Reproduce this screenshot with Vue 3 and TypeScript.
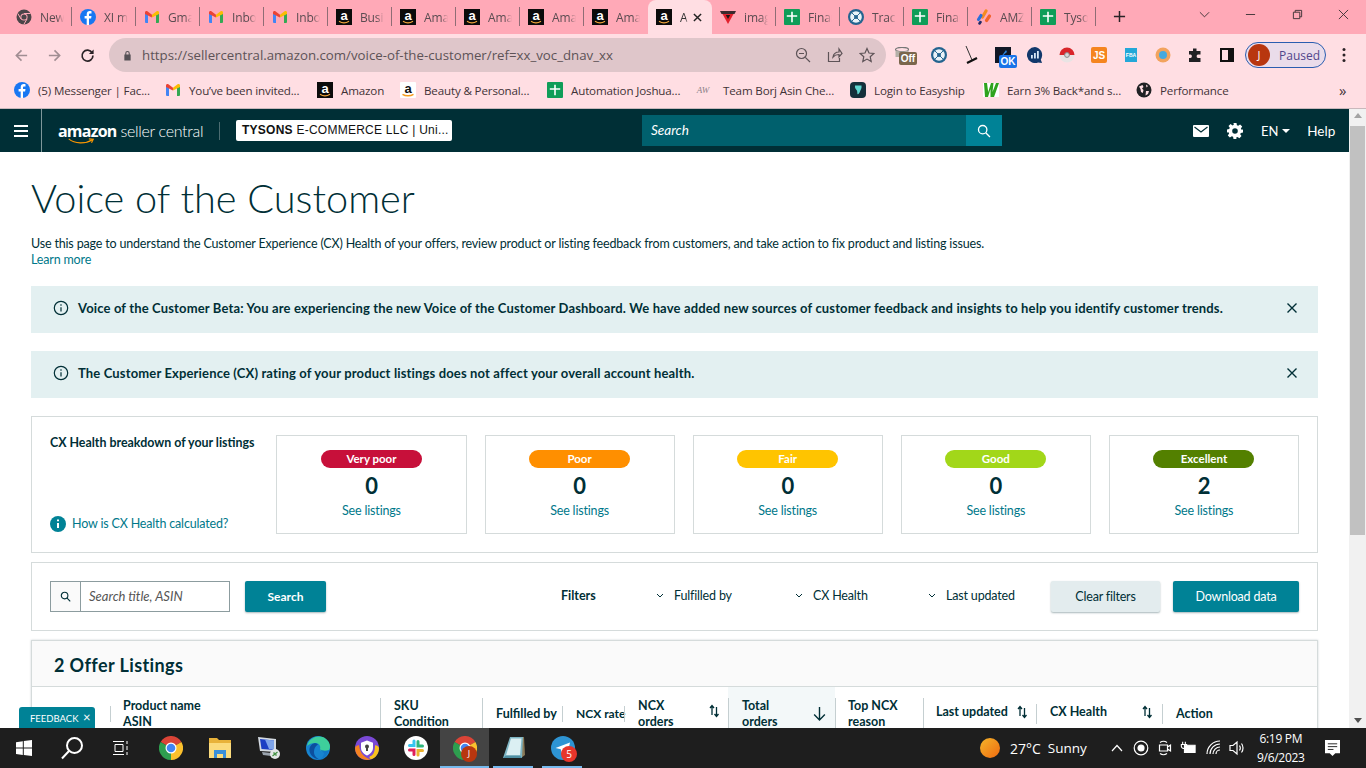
<script setup lang="ts">
interface Tab { icon: string; title: string; active?: boolean }
interface Bookmark { icon: string; title: string }
interface Rating { label: string; count: number; tone: string }
interface Column { title: string[]; sep: string; sort?: string; current?: boolean; name: string }

const tabs: Tab[] = [
  { icon: 'chromegrey', title: 'New Tab' },
  { icon: 'fb', title: 'XI main' },
  { icon: 'gmail', title: 'Gmail' },
  { icon: 'gmail', title: 'Inbox' },
  { icon: 'gmail', title: 'Inbox' },
  { icon: 'amz', title: 'Business' },
  { icon: 'amz', title: 'Amazon' },
  { icon: 'amz', title: 'Amazon' },
  { icon: 'amz', title: 'Amazon' },
  { icon: 'amz', title: 'Amazon' },
  { icon: 'amz', title: 'Amazon', active: true },
  { icon: 'imag', title: 'image' },
  { icon: 'sheet', title: 'Finance' },
  { icon: 'track', title: 'Tracker' },
  { icon: 'sheet', title: 'Finance' },
  { icon: 'slash', title: 'AMZ' },
  { icon: 'sheet', title: 'Tysons' },
]

const bookmarks: Bookmark[] = [
  { icon: 'fb', title: '(5) Messenger | Fac...' },
  { icon: 'gmail', title: 'You’ve been invited...' },
  { icon: 'amz', title: 'Amazon' },
  { icon: 'amzlight', title: 'Beauty & Personal...' },
  { icon: 'sheet', title: 'Automation Joshua...' },
  { icon: 'team', title: 'Team Borj Asin Che...' },
  { icon: 'easyship', title: 'Login to Easyship' },
  { icon: 'earn', title: 'Earn 3% Back*and s...' },
  { icon: 'globe', title: 'Performance' },
]

const ratings: Rating[] = [
  { label: 'Very poor', count: 0, tone: 'very-poor' },
  { label: 'Poor', count: 0, tone: 'poor' },
  { label: 'Fair', count: 0, tone: 'fair' },
  { label: 'Good', count: 0, tone: 'good' },
  { label: 'Excellent', count: 2, tone: 'excellent' },
]

const columns: Column[] = [
  { name: 'select', title: [], sep: 'none' },
  { name: 'product', title: ['Product name', 'ASIN'], sep: 'short' },
  { name: 'sku', title: ['SKU', 'Condition'], sep: 'tall' },
  { name: 'fulfilled', title: ['Fulfilled by'], sep: 'tall' },
  { name: 'rate', title: ['NCX rate'], sep: 'short' },
  { name: 'orders', title: ['NCX', 'orders'], sep: 'short', sort: 'both' },
  { name: 'total', title: ['Total', 'orders'], sep: 'tall', sort: 'down', current: true },
  { name: 'reason', title: ['Top NCX', 'reason'], sep: 'tall' },
  { name: 'updated', title: ['Last updated'], sep: 'tall', sort: 'both' },
  { name: 'health', title: ['CX Health'], sep: 'mid', sort: 'both' },
  { name: 'action', title: ['Action'], sep: 'mid' },
]

const dock: string[] = ['chrome', 'folder', 'rdp', 'edge', 'vpn', 'slack', 'chrome', 'notes', 'telegram']
</script>

<template>
  <div class="screen">
    <svg class="defs" width="0" height="0" aria-hidden="true">
      <symbol id="i-chromegrey" viewBox="0 0 16 16">
        <circle cx="8" cy="8" r="7.5" fill="#4a4548" />
        <path d="M8 4.500h6.500M5 10 1.800 4.500M11 10l-3.200 5.500" stroke="#ffa9b7" stroke-width="1" />
        <circle cx="8" cy="8" r="3.600" fill="#ffa9b7" />
        <circle cx="8" cy="8" r="2.600" fill="#4a4548" />
      </symbol>
      <symbol id="i-fb" viewBox="0 0 16 16">
        <circle cx="8" cy="8" r="8" fill="#1877f2" />
        <path d="M9 16V9.6h2.1l.4-2.5H9V5.6c0-.8.3-1.2 1.3-1.2h1.2V2.2c-.5-.1-1.2-.2-1.8-.2C8 2 6.700 3 6.700 5.200v1.900H4.600v2.500h2.100V16z" fill="#fff" />
      </symbol>
      <symbol id="i-gmail" viewBox="0 0 16 16">
        <path d="M1 14V4l3 2v8H2a1 1 0 0 1-1-1z" fill="#4285f4" />
        <path d="M15 14V4l-3 2v8h2a1 1 0 0 0 1-1z" fill="#34a853" />
        <path d="M1 5V3.500C1 2.200 2.400 1.600 3.400 2.300L8 5.800l-.1 2.600z" fill="#ea4335" />
        <path d="M15 5V3.500c0-1.300-1.400-1.900-2.400-1.200L8 5.800v2.600z" fill="#fbbc04" />
      </symbol>
      <symbol id="i-amz" viewBox="0 0 16 16">
        <rect width="16" height="16" fill="#0b0b0b" />
        <text x="8" y="10.800" text-anchor="middle" font-family="Liberation Sans, sans-serif" font-weight="700" font-size="13" fill="#fff">a</text>
        <path d="M3 12.300c3 2 7 2 10 0" fill="none" stroke="#f0a43a" stroke-width="1.200" />
      </symbol>
      <symbol id="i-amzlight" viewBox="0 0 16 16">
        <rect width="16" height="16" rx="1" fill="#fff" />
        <text x="8" y="10.800" text-anchor="middle" font-family="Liberation Sans, sans-serif" font-weight="700" font-size="13" fill="#111">a</text>
        <path d="M2.500 12.300c3 2 8 2 11 0" fill="none" stroke="#f59b1c" stroke-width="1.400" />
      </symbol>
      <symbol id="i-sheet" viewBox="0 0 16 16">
        <rect width="16" height="16" rx="1" fill="#0f9d58" />
        <path d="M7.200 2.800h1.600v3.400h4.400v1.600H8.800v5.400H7.200V7.800H2.800V6.200h4.400z" fill="#fff" />
      </symbol>
      <symbol id="i-track" viewBox="0 0 16 16">
        <circle cx="8" cy="8" r="8" fill="#24648f" />
        <circle cx="8" cy="8" r="5.800" fill="#e9f2f7" />
        <path d="M8 1.500v13M1.500 8h13" stroke="#24648f" stroke-width="0.900" transform="rotate(45 8 8)" />
        <circle cx="8" cy="8" r="2" fill="#24648f" />
      </symbol>
      <symbol id="i-imag" viewBox="0 0 16 16">
        <path d="M0 2h16l-1.500 3h-13z" fill="#3a2a2e" />
        <path d="M2.500 5h11L8 15z" fill="#e2202c" />
        <path d="M5.800 6h4.400L8 10z" fill="#1d1416" />
      </symbol>
      <symbol id="i-slash" viewBox="0 0 16 16">
        <path d="M6.500 8 10 2" stroke="#f58a1f" stroke-width="3.200" stroke-linecap="round" />
        <path d="M10.500 11.500 13.500 7" stroke="#f2622a" stroke-width="3.200" stroke-linecap="round" />
        <path d="M2.500 10.500 5 6.500" stroke="#2a6fdb" stroke-width="3.200" stroke-linecap="round" />
        <path d="M3.500 14.500 4.500 13" stroke="#1f2a66" stroke-width="2.600" stroke-linecap="round" />
      </symbol>
      <symbol id="i-team" viewBox="0 0 16 16">
        <text x="8" y="11" text-anchor="middle" font-family="Liberation Serif, serif" font-style="italic" font-size="9" fill="#8a7f88">AW</text>
      </symbol>
      <symbol id="i-easyship" viewBox="0 0 16 16">
        <rect width="16" height="16" rx="4" fill="#15303b" />
        <path d="M5 3.500h6.500c.5 3-1 4.500-1.500 6-.4 1.200-1.500 3-2.300 2.800-.6-.2-.2-2.600-.8-3.700C6 7.300 4.500 6 5 3.500z" fill="#5fd6cf" />
      </symbol>
      <symbol id="i-earn" viewBox="0 0 16 16">
        <path d="M0 1h16v14H0z" fill="#fff" />
        <path d="M1 1h3l1.200 9L8 1h2.500L9.500 10 13 1h3l-5 14H7.500L7.500 7 5 15H2z" fill="#2fa31e" />
      </symbol>
      <symbol id="i-globe" viewBox="0 0 16 16">
        <circle cx="8" cy="8" r="7.500" fill="#202124" />
        <path d="M3 4.500 6.500 3l1 2-1.500 1.500L7.500 8 6.800 11 5 10 4.500 7zM10 9h3l-1 3-2.500 1.500zM10 2.500l2 1.500-1.500 1.500z" fill="#ffdee3" />
      </symbol>
    </svg>

    <header class="tabstrip">
      <div
        v-for="(tab, i) in tabs"
        :key="i"
        class="tab"
        :class="{ active: tab.active, 'no-sep': tab.active || tabs[i + 1]?.active }"
      >
        <svg class="fav"><use :href="'#i-' + tab.icon" /></svg>
        <span class="tab-title">{{ tab.title }}</span>
        <svg v-if="tab.active" class="tab-close" viewBox="0 0 10 10"><path d="M1 1l8 8M9 1l-8 8" /></svg>
      </div>
      <svg class="new-tab" viewBox="0 0 14 14"><path d="M7 1v12M1 7h12" /></svg>
      <div class="win-controls">
        <svg class="win-list" viewBox="0 0 12 8"><path d="M1 1l5 5 5-5" /></svg>
        <svg class="win-min" viewBox="0 0 12 12"><path d="M1 6h10" /></svg>
        <svg class="win-max" viewBox="0 0 12 12"><path d="M1.500 3.500h7v7h-7zM3.500 3.500v-2h7v7h-2" /></svg>
        <svg class="win-close" viewBox="0 0 12 12"><path d="M1 1l10 10M11 1L1 11" /></svg>
      </div>
    </header>

    <div class="toolbar">
      <svg class="tool-nav" viewBox="0 0 16 16"><path d="M14 8H2.500M8 2.500 2.500 8 8 13.500" /></svg>
      <svg class="tool-nav" viewBox="0 0 16 16"><path d="M2 8h11.500M8 2.500 13.500 8 8 13.500" /></svg>
      <svg class="tool-reload" viewBox="0 0 16 16">
        <path d="M13 5.200A5.800 5.800 0 1 0 13.800 8" />
        <path class="fill" d="M14.500 1.500v5h-5z" />
      </svg>
      <div class="omnibox">
        <svg class="lock" viewBox="0 0 10 12"><path d="M2.500 5V3.500a2.500 2.500 0 0 1 5 0V5h1v6.500h-7V5zm1.200 0h2.600V3.500a1.300 1.300 0 0 0-2.600 0z" /></svg>
        <span class="url">https://sellercentral.amazon.com/voice-of-the-customer/ref=xx_voc_dnav_xx</span>
        <svg class="omni-icon zoom-out" viewBox="0 0 16 16"><circle cx="6.500" cy="6.500" r="5" /><path d="M10.300 10.300 15 15M4 6.500h5" /></svg>
        <svg class="omni-icon share" viewBox="0 0 16 16"><path d="M1.500 5v9.500h11V11M6 10c.5-3 2.500-5 6-5V2l3 4.500L12 10V7.500c-2.500 0-4.500.7-6 2.500z" /></svg>
        <svg class="omni-icon star" viewBox="0 0 16 16"><path d="M8 1.500l2 4.500 4.800.5-3.600 3.200 1 4.800L8 12.100l-4.200 2.400 1-4.800L1.200 6.500 6 6z" /></svg>
      </div>
      <div class="extensions">
        <span class="ext"><svg class="ext-can" viewBox="0 0 14 12" width="14" height="12"><ellipse cx="7" cy="2.500" rx="6.500" ry="2.200" fill="none" stroke="#777" stroke-width="1.200" /><path d="M.5 3v7h13V3c-3 2-10 2-13 0z" fill="#b4b0a8" /></svg><b class="ext-off">Off</b></span>
        <span class="ext"><svg class="fav"><use href="#i-track" /></svg></span>
        <span class="ext"><svg viewBox="0 0 16 18" width="16" height="18"><path d="M3 0l6 14" fill="none" stroke="#333" stroke-width="1" /><path d="M4 17l10-5" stroke="#111" stroke-width="2.200" /></svg></span>
        <span class="ext"><svg viewBox="0 0 16 16" width="16" height="16"><rect width="16" height="16" fill="#111725" /><path d="M6 10 11 3l1 2z" fill="#2a82d6" /></svg><b class="ext-ok">OK</b></span>
        <span class="ext"><svg viewBox="0 0 16 16" width="16" height="16"><path d="M8 0a8 8 0 1 0 3 15.400l4 .6-1.200-3.600A8 8 0 0 0 8 0z" fill="#12386b" /><path d="M4 8h1.800v3.500H4zM7 6h1.800v5.500H7zM10 4h1.800v7.500H10z" fill="#d8e6f5" /></svg></span>
        <span class="ext"><svg viewBox="0 0 16 16" width="16" height="16"><circle cx="8" cy="8" r="7.500" fill="#e9e4e4" /><path d="M.500 8a7.500 7.500 0 0 1 15 0z" fill="#d9252a" /><circle cx="8" cy="8" r="2.400" fill="#d8d8d8" stroke="#888" /></svg></span>
        <span class="ext"><span class="ext-js">JS</span></span>
        <span class="ext"><span class="ext-fba">FBA</span></span>
        <span class="ext"><svg viewBox="0 0 16 16" width="16" height="16"><circle cx="8" cy="8" r="7.500" fill="#f2a35e" /><circle cx="8" cy="8" r="4" fill="#45a9e0" /></svg></span>
        <span class="ext"><svg viewBox="0 0 16 16" width="16" height="16"><path d="M6 1.500h3.500V4h4v3.500H11a1.800 1.800 0 0 0 0 3.500h2.500V15H2v-4h1.500a1.800 1.800 0 0 0 0-3.500H2V4h4z" fill="#202124" /></svg></span>
        <span class="ext"><svg viewBox="0 0 14 14" width="14" height="14"><rect x="1" y="1" width="12" height="12" fill="none" stroke="#111" stroke-width="2" /><rect x="8" y="1" width="5" height="12" fill="#111" /></svg></span>
      </div>
      <div class="profile">
        <span class="avatar">J</span>
        <span class="profile-label">Paused</span>
      </div>
      <svg class="kebab" viewBox="0 0 4 16"><circle cx="2" cy="2.500" r="1.500" /><circle cx="2" cy="8" r="1.500" /><circle cx="2" cy="13.500" r="1.500" /></svg>
    </div>

    <nav class="bookmarks">
      <div v-for="mark in bookmarks" :key="mark.title" class="bookmark">
        <svg class="fav"><use :href="'#i-' + mark.icon" /></svg>
        <span>{{ mark.title }}</span>
      </div>
      <span class="more">»</span>
    </nav>

    <div class="viewport">
      <div class="page">
        <div class="topbar">
          <div class="burger"><i></i><i></i><i></i></div>
          <div class="brand">
            <span class="brand-amazon">amazon</span>
            <span class="brand-seller">seller central</span>
            <svg class="brand-smile" viewBox="0 0 30 8"><path d="M1 1c7 6 19 6 27 1" /><path d="M24 1l5 .5-2 4" /></svg>
          </div>
          <span class="topbar-sep"></span>
          <div class="account"><b>TYSONS</b> E-COMMERCE LLC | Uni...</div>
          <div class="site-search">
            <span class="site-search-input">Search</span>
            <span class="site-search-btn">
              <svg viewBox="0 0 16 16"><circle cx="6.500" cy="6.500" r="4.800" /><path d="M10 10l4.800 4.800" /></svg>
            </span>
          </div>
          <svg class="top-icon mail" viewBox="0 0 16 12"><path d="M1 0h14a1 1 0 0 1 1 1v10a1 1 0 0 1-1 1H1a1 1 0 0 1-1-1V1a1 1 0 0 1 1-1z" /><path class="notch" d="M1.500 2 8 7l6.500-5" /></svg>
          <svg class="top-icon gear" viewBox="0 0 16 16"><path fill-rule="evenodd" d="M6.500 0h3l.4 2.200 1.300.6L13.100 1.500l2.100 2.100-1.300 1.900.6 1.300L16 6.500v3l-2.200.4-.6 1.300 1.300 1.900-2.100 2.100-1.900-1.300-1.300.6L9.500 16h-3l-.4-2.200-1.300-.6-1.900 1.300L.8 12.400l1.300-1.900-.6-1.300L0 9.500v-3l2.200-.4.6-1.300L1.500 3l2.100-1.900 1.900 1.300 1.300-.6zM8 5.200a2.800 2.800 0 1 0 0 5.600 2.800 2.800 0 0 0 0-5.600z" /></svg>
          <span class="lang">EN</span>
          <span class="caret"></span>
          <span class="help">Help</span>
        </div>

        <main class="content">
          <h1>Voice of the Customer</h1>
          <p class="intro">Use this page to understand the Customer Experience (CX) Health of your offers, review product or listing feedback from customers, and take action to fix product and listing issues.</p>
          <a class="link">Learn more</a>

          <div class="alert">
            <svg class="alert-icon" viewBox="0 0 16 16"><circle cx="8" cy="8" r="6.700" /><path d="M8 7.200v4.200M8 4.300v1.400" /></svg>
            <span>Voice of the Customer Beta: You are experiencing the new Voice of the Customer Dashboard. We have added new sources of customer feedback and insights to help you identify customer trends.</span>
            <svg class="alert-close" viewBox="0 0 10 10"><path d="M.5.500l9 9M9.500.500l-9 9" /></svg>
          </div>
          <div class="alert">
            <svg class="alert-icon" viewBox="0 0 16 16"><circle cx="8" cy="8" r="6.700" /><path d="M8 7.200v4.200M8 4.300v1.400" /></svg>
            <span>The Customer Experience (CX) rating of your product listings does not affect your overall account health.</span>
            <svg class="alert-close" viewBox="0 0 10 10"><path d="M.5.500l9 9M9.500.500l-9 9" /></svg>
          </div>

          <section class="panel health">
            <div class="health-intro">
              <strong>CX Health breakdown of your listings</strong>
              <a class="link how">
                <svg viewBox="0 0 16 16"><circle cx="8" cy="8" r="8" fill="#008296" /><path d="M8 7v5M8 3.600v1.700" stroke="#fff" stroke-width="2" /></svg>
                How is CX Health calculated?
              </a>
            </div>
            <div v-for="rating in ratings" :key="rating.label" class="rating">
              <span class="pill" :class="rating.tone">{{ rating.label }}</span>
              <span class="count">{{ rating.count }}</span>
              <a class="link">See listings</a>
            </div>
          </section>

          <section class="panel filters">
            <div class="search-field">
              <span class="search-field-icon">
                <svg viewBox="0 0 12 12"><circle cx="5" cy="5" r="3.600" /><path d="M7.700 7.700l3.500 3.500" /></svg>
              </span>
              <span class="search-field-input">Search title, ASIN</span>
            </div>
            <button class="btn primary search-btn">Search</button>
            <strong class="filters-label">Filters</strong>
            <div class="filter fulfilled"><svg viewBox="0 0 8 6"><path d="M1 1l3 3 3-3" /></svg>Fulfilled by</div>
            <div class="filter cx"><svg viewBox="0 0 8 6"><path d="M1 1l3 3 3-3" /></svg>CX Health</div>
            <div class="filter updated"><svg viewBox="0 0 8 6"><path d="M1 1l3 3 3-3" /></svg>Last updated</div>
            <button class="btn secondary clear-btn">Clear filters</button>
            <button class="btn primary download-btn">Download data</button>
          </section>

          <section class="panel listings">
            <h2>2 Offer Listings</h2>
            <div class="thead">
              <div
                v-for="col in columns"
                :key="col.name"
                class="th"
                :class="['col-' + col.name, 'sep-' + col.sep, { current: col.current }]"
              >
                <div class="th-title">
                  <span v-for="line in col.title" :key="line">{{ line }}</span>
                </div>
                <svg v-if="col.sort === 'both'" class="sort" viewBox="0 0 12 14">
                  <path d="M4 11V2M2 4l2-2.500L6 4M8.500 3v9M6.500 10l2 2.500 2-2.500" />
                </svg>
                <svg v-if="col.sort === 'down'" class="sort-down" viewBox="0 0 12 14">
                  <path d="M6 1v12M1 8l5 5 5-5" />
                </svg>
              </div>
            </div>
          </section>
        </main>

        <div class="feedback">FEEDBACK <span class="feedback-x">×</span></div>
      </div>

      <div class="scrollbar">
        <span class="arrow up"></span>
        <div class="thumb"></div>
        <span class="arrow down"></span>
      </div>
    </div>

    <footer class="taskbar">
      <div class="task-slot">
        <svg class="win-logo" viewBox="0 0 16 16"><path d="M0 2.200 6.800 1.200v6.400H0zM7.800 1l8.200-1v7.600H7.800zM0 8.600h6.800v6.300L0 14zM7.800 8.600H16V16l-8.200-1.100z" /></svg>
      </div>
      <div class="task-slot">
        <svg class="task-search" viewBox="0 0 24 24"><circle cx="14.500" cy="9.500" r="7.500" /><path d="M9 15 2 22.500" /></svg>
      </div>
      <div class="task-slot view-slot">
        <svg class="task-view" viewBox="0 0 18 16"><path d="M1 1.500h11M1 14.500h11M3 4.500h8v7H3zM15 1v3M15 6v4M15 12v3" /></svg>
      </div>
      <div
        v-for="(app, i) in dock"
        :key="i"
        class="task-slot app"
        :class="{ running: i > 5, focused: i === 6 }"
      >
        <svg v-if="app === 'chrome'" viewBox="0 0 24 24" width="24" height="24">
          <path d="M12 12 1.600 6A12 12 0 0 1 22.400 6z" fill="#db4437" />
          <path d="M12 12 22.400 6A12 12 0 0 1 12 24z" fill="#fbc02d" />
          <path d="M12 12 12 24A12 12 0 0 1 1.600 6z" fill="#2e9e4f" />
          <circle cx="12" cy="12" r="5.500" fill="#fff" />
          <circle cx="12" cy="12" r="4.300" fill="#4285f4" />
        </svg>
        <svg v-else-if="app === 'folder'" viewBox="0 0 24 24" width="24" height="24">
          <path d="M1 2h8l2 2h12v18H1z" fill="#e8b23a" />
          <path d="M1 7h22v15H1z" fill="#fbdb7d" />
          <path d="M6 14h12v8h-3v-4H9v4H6z" fill="#3b8fd9" />
        </svg>
        <svg v-else-if="app === 'rdp'" viewBox="0 0 24 24" width="24" height="24">
          <path d="M1 1l18 2v13L3 15z" fill="#d4dae2" />
          <path d="M3 3l14 1.500v9.500L4.500 13z" fill="#1c3fc4" />
          <path d="M8 3.500l9 1v9l-5-.5z" fill="#7ea4ea" />
          <path d="M5 16l9 1v3l-8-1z" fill="#9aa3ae" />
          <circle cx="18" cy="18" r="5" fill="#e3e6e8" />
          <path d="M15.500 20l5-4M16 17h2M18 19h2" stroke="#3f8f3f" stroke-width="1.200" />
        </svg>
        <svg v-else-if="app === 'edge'" viewBox="0 0 24 24" width="24" height="24">
          <circle cx="12" cy="12" r="12" fill="#1784d0" />
          <path d="M1 10C3 1 14-2 20 3c4 3 5 8 3 11-3 3-9 2-9-1 1-3-1-6-5-6-3 0-6 1-8 3z" fill="#3ecf9b" />
          <path d="M9 7c-4 1-6 4-5.500 8 .7 5 6 9 11.500 8.500-4-.5-7-3.500-7-7.500 0-3 1-6 4-7.500C11 8 10 7 9 7z" fill="#0c4f9e" />
          <path d="M14 13c2 2 6 2 9 1-1 4-4 8-8 9 2-2 3-4 3-6-1-1-3-2-4-4z" fill="#1178c8" />
        </svg>
        <svg v-else-if="app === 'vpn'" viewBox="0 0 24 24" width="24" height="24">
          <circle cx="12" cy="12" r="12" fill="#7a49d6" />
          <path d="M0 12a12 12 0 0 0 16 11.300C10 22 5 18 4 9 2 9.500.500 10 0 12z" fill="#f58320" />
          <path d="M24 12c0 6-4 10.500-8 11.300-2-1-2-2-1-3 4-1 5-6 5-11 2 0 3.500 1 4 2.700z" fill="#f9c21d" />
          <path d="M12 4.500l6 2.200v5.300c0 3.500-3 6-6 7.500-3-1.500-6-4-6-7.500V6.700z" fill="#fff" />
          <circle cx="12" cy="10.500" r="2" fill="#444" />
          <path d="M11 11h2v4h-2z" fill="#444" />
        </svg>
        <svg v-else-if="app === 'slack'" viewBox="0 0 24 24" width="24" height="24">
          <circle cx="12" cy="12" r="12" fill="#fff" />
          <path d="M10 5v4.500H5.500" fill="none" stroke="#36c5f0" stroke-width="3" stroke-linecap="round" />
          <path d="M18.500 10H14V5.500" fill="none" stroke="#2eb67d" stroke-width="3" stroke-linecap="round" />
          <path d="M14 19v-4.500h4.500" fill="none" stroke="#ecb22e" stroke-width="3" stroke-linecap="round" />
          <path d="M5.500 14H10v4.500" fill="none" stroke="#e01e5a" stroke-width="3" stroke-linecap="round" />
        </svg>
        <svg v-else-if="app === 'notes'" viewBox="0 0 24 24" width="24" height="24">
          <path d="M8 1h14l1 18-4 3z" fill="#8a7a58" />
          <path d="M8 1h13l-1 21H1z" fill="#7fb6c4" />
          <path d="M9 2.500h10.500L18 19.500H4z" fill="#dbeff3" />
          <path d="M1 22 4 19.500h14l2 2.500z" fill="#4f8fa3" />
        </svg>
        <svg v-else viewBox="0 0 24 24" width="24" height="24">
          <circle cx="12" cy="12" r="12" fill="#2e94d3" />
          <path d="M4.500 12 19 6.500 16.500 18l-4-3-2 2-.7-3.800z" fill="#fff" />
        </svg>
        <span v-if="i === 6" class="badge-j">J</span>
        <span v-if="app === 'telegram'" class="badge-count">5</span>
      </div>

      <div class="tray">
        <span class="sun"></span>
        <span class="temp">27°C</span>
        <span class="sky">Sunny</span>
        <svg class="tray-chevron" viewBox="0 0 12 8"><path d="M1 7l5-5.500L11 7" /></svg>
        <svg class="tray-icon rec" viewBox="0 0 16 16"><circle cx="8" cy="8" r="6.800" /><circle class="solid" cx="8" cy="8" r="3" /></svg>
        <svg class="tray-icon meet" viewBox="0 0 16 16"><path d="M3 2.500a6 6 0 0 1 7 0M3 13.500a6 6 0 0 0 7 0M2.500 5h8v6h-8zM10.500 7l3-2v6l-3-2" /></svg>
        <svg class="tray-icon power" viewBox="0 0 18 16"><path class="solid" d="M5 5h12v8H5z" /><path d="M3 1v3M6 1v3M1.500 4h6v2c0 2-2 2.500-3 2.500S1.500 8 1.500 6z" /></svg>
        <svg class="tray-icon wifi" viewBox="0 0 16 16"><path d="M1 14A13 13 0 0 1 14 1M4 14A10 10 0 0 1 14 4M7 14a7 7 0 0 1 7-7M10 14a4 4 0 0 1 4-4" /></svg>
        <svg class="tray-icon volume" viewBox="0 0 16 16"><path d="M1 5.500h3L8 2v12l-4-3.500H1zM10.500 5.500c1 1.500 1 3.500 0 5M12.500 3.500c2 2.500 2 6.500 0 9" /></svg>
        <div class="clock"><span>6:19 PM</span><span>9/6/2023</span></div>
        <svg class="notify" viewBox="0 0 16 18"><path d="M0 0h16v14h-5l-3 3-3-3H0z" /><path class="lines" d="M3 4h10M3 7h10M3 10h6" /></svg>
      </div>
    </footer>
  </div>
</template>

<style>
html,
body {
  margin: 0;
  overflow: hidden;
}
</style>

<style scoped>
.screen {
  width: 1366px;
  height: 768px;
  display: flex;
  flex-direction: column;
  overflow: hidden;
  font-family: Lato, "Liberation Sans", sans-serif;
  color: #002f36;
  background: #fff;
}

.defs {
  position: absolute;
}

.fav {
  width: 16px;
  height: 16px;
  flex: none;
}

/* browser chrome */
.tabstrip {
  height: 34px;
  padding-left: 8px;
  display: flex;
  align-items: stretch;
  flex: none;
  background: #ffa9b7;
  font-family: "Open Sans", sans-serif;
  font-size: 12px;
  letter-spacing: -0.15px;
  color: #5a4c51;
}

.tab {
  width: 64px;
  padding-left: 8px;
  display: flex;
  align-items: center;
  gap: 8px;
  box-sizing: border-box;
  position: relative;
}

.tab::after {
  content: "";
  position: absolute;
  right: 0;
  top: 7px;
  bottom: 8px;
  width: 1px;
  background: #8f6d75;
}

.tab.no-sep::after {
  display: none;
}

.tab.active {
  background: #ffdee3;
  border-radius: 8px 8px 0 0;
  color: #333;
}

.tab-title {
  width: 24px;
  overflow: hidden;
  white-space: nowrap;
  -webkit-mask-image: linear-gradient(90deg, #000 70%, transparent);
  mask-image: linear-gradient(90deg, #000 70%, transparent);
}

.tab.active .tab-title {
  width: 8px;
}

.tab-close {
  width: 9px;
  height: 9px;
  margin-left: -3px;
  flex: none;
  fill: none;
  stroke: #222;
  stroke-width: 1.6;
}

.new-tab {
  width: 13px;
  height: 13px;
  margin: 10px 0 0 17px;
  fill: none;
  stroke: #2a2226;
  stroke-width: 1.6;
}

.win-controls {
  margin-left: auto;
  display: flex;
  align-items: flex-start;
}

.win-controls svg {
  fill: none;
  stroke: #3a3033;
  stroke-width: 1;
  width: 11px;
  height: 11px;
  margin-top: 9px;
}

.win-list {
  margin-right: 35px;
  height: 8px !important;
  margin-top: 11px !important;
}

.win-min {
  margin-right: 36px;
}

.win-max {
  margin-right: 35px;
}

.win-close {
  margin-right: 17px;
}

.toolbar {
  height: 40px;
  flex: none;
  display: flex;
  align-items: center;
  padding: 2px 0 0 14px;
  box-sizing: border-box;
  background: #ffdee3;
}

.tool-nav {
  width: 15px;
  height: 15px;
  margin-right: 18px;
  fill: none;
  stroke: #a08d92;
  stroke-width: 1.7;
}

.tool-reload {
  width: 15px;
  height: 15px;
  fill: none;
  stroke: #2a2226;
  stroke-width: 1.8;
}

.tool-reload .fill {
  fill: #2a2226;
  stroke: none;
}

.omnibox {
  width: 777px;
  height: 34px;
  margin-left: 14px;
  padding-left: 14px;
  box-sizing: border-box;
  border-radius: 17px;
  flex: none;
  display: flex;
  align-items: center;
  background: #dfc6ca;
}

.lock {
  width: 9px;
  height: 11px;
  flex: none;
  fill: #555055;
}

.url {
  margin-left: 10px;
  width: 653px;
  flex: none;
  font-family: "Open Sans", sans-serif;
  font-size: 13.25px;
  color: #5d5357;
  white-space: nowrap;
}

.omni-icon {
  width: 16px;
  height: 16px;
  flex: none;
  fill: none;
  stroke: #5d5357;
  stroke-width: 1.2;
}

.share {
  margin-left: 16px;
}

.star {
  margin-left: 16px;
}

.extensions {
  margin-left: 5px;
  display: grid;
  grid-template-columns: repeat(11, 32px);
  justify-items: center;
  align-items: center;
}

.ext {
  position: relative;
  display: flex;
  align-items: center;
  justify-content: center;
  width: 18px;
  height: 18px;
}

.ext-can {
  position: absolute;
  left: -3px;
  top: 1px;
}

.ext-off {
  position: absolute;
  left: 1px;
  top: 6px;
  width: 18px;
  height: 13px;
  border-radius: 2px;
  font: 700 10px/13px "Liberation Sans", sans-serif;
  text-align: center;
  color: #fff;
  background: #7a664c;
}

.ext-ok {
  position: absolute;
  left: 5px;
  top: 9px;
  width: 18px;
  height: 13px;
  border-radius: 2px;
  font: 700 10px/13px "Liberation Sans", sans-serif;
  text-align: center;
  color: #fff;
  background: #1a73e8;
}

.ext-js {
  width: 16px;
  height: 16px;
  border-radius: 2px;
  font: 700 10px/18px "Liberation Sans", sans-serif;
  text-align: center;
  color: #fff;
  background: #f5851f;
}

.ext-fba {
  width: 12px;
  height: 14px;
  font: 700 5px/14px "Liberation Sans", sans-serif;
  text-align: center;
  color: #fff;
  background: #23a8d8;
}

.profile {
  width: 81px;
  height: 26px;
  margin-left: 2px;
  box-sizing: border-box;
  border: 1px solid #2a5db0;
  border-radius: 14px;
  display: flex;
  align-items: center;
  background: #eadcea;
  flex: none;
}

.avatar {
  width: 22px;
  height: 22px;
  margin-left: 2px;
  border-radius: 50%;
  background: #b8360f;
  color: #fff;
  font: 11px/22px "Open Sans", sans-serif;
  text-align: center;
}

.profile-label {
  margin-left: 9px;
  font: 12px "Open Sans", sans-serif;
  color: #52468a;
}

.kebab {
  width: 4px;
  height: 16px;
  margin-left: 16px;
  fill: #2a2226;
}

.bookmarks {
  height: 35px;
  flex: none;
  padding: 0 0 2px 14px;
  box-sizing: border-box;
  display: grid;
  grid-template-columns: 151px 152px 83px 147px 148px 155px 133px 153px 203px auto;
  align-items: center;
  background: #ffdee3;
  font-family: "Open Sans", sans-serif;
  font-size: 11.6px;
  letter-spacing: -0.15px;
  color: #3f3337;
  border-bottom: 1px solid #c9b8bc;
}

.bookmark {
  display: flex;
  align-items: center;
  gap: 8px;
  white-space: nowrap;
}

.bookmark:nth-child(6) {
  gap: 12px;
}

.more {
  font-size: 15px;
}

.viewport {
  flex: 1;
  min-height: 0;
  display: flex;
}

.page {
  flex: 1;
  min-width: 0;
  position: relative;
  overflow: hidden;
  display: flex;
  flex-direction: column;
}

/* seller central nav */
.topbar {
  height: 43px;
  flex: none;
  display: flex;
  align-items: center;
  background: #002f36;
  color: #fff;
}

.burger {
  width: 42px;
  height: 100%;
  border-right: 1px solid #7f979a;
  display: flex;
  flex-direction: column;
  justify-content: center;
  gap: 3px;
  padding-left: 14px;
  box-sizing: border-box;
}

.burger i {
  display: block;
  width: 14px;
  height: 2px;
  background: #fff;
}

.brand {
  margin-left: 16px;
  width: 160px;
  position: relative;
  display: flex;
  align-items: baseline;
  gap: 4px;
  white-space: nowrap;
}

.brand-amazon {
  font: 700 16px "Open Sans", sans-serif;
  letter-spacing: -0.8px;
}

.brand-seller {
  font: 300 16px Lato, sans-serif;
  letter-spacing: -0.3px;
}

.brand-smile {
  position: absolute;
  left: 9px;
  top: 18px;
  width: 28px;
  height: 7px;
  fill: none;
  stroke: #f90;
  stroke-width: 1.300;
}

.topbar-sep {
  width: 1px;
  height: 18px;
  margin-left: 1px;
  background: #4c6c71;
}

.account {
  width: 216px;
  height: 21px;
  margin-left: 16px;
  padding-left: 6px;
  box-sizing: border-box;
  border-radius: 2px;
  background: #fff;
  color: #111;
  font: 12px/21px "Liberation Sans", sans-serif;
  letter-spacing: 0.25px;
  white-space: nowrap;
}

.site-search {
  width: 360px;
  height: 31px;
  margin-left: 190px;
  display: flex;
  background: #00606d;
}

.site-search-input {
  flex: 1;
  padding-left: 9px;
  font-size: 13.5px;
  line-height: 31px;
  font-style: italic;
}

.site-search-btn {
  width: 36px;
  background: #008296;
  display: flex;
  align-items: center;
  justify-content: center;
}

.site-search-btn svg {
  width: 14px;
  height: 14px;
  fill: none;
  stroke: #fff;
  stroke-width: 1.500;
}

.top-icon {
  flex: none;
  fill: #fff;
}

.mail {
  width: 16px;
  height: 12px;
  margin-left: 191px;
}

.notch {
  fill: none;
  stroke: #002f36;
  stroke-width: 1.200;
}

.gear {
  width: 16px;
  height: 16px;
  margin-left: 18px;
}

.lang {
  margin-left: 18px;
  font-size: 13px;
  letter-spacing: -0.1px;
}

.caret {
  margin-left: 4px;
  border: 4px solid transparent;
  border-top-color: #fff;
  border-bottom: 0;
}

.help {
  margin-left: 17px;
  font-size: 13.5px;
  letter-spacing: 0;
}

/* main content */
.content {
  padding: 22px 31px 0;
  font-size: 12.5px;
  letter-spacing: -0.17px;
}

h1 {
  margin: 0;
  font-size: 39.7px;
  line-height: 48px;
  font-weight: 300;
  letter-spacing: 0;
  color: #002f36;
}

.intro {
  margin: 14px 0 0;
  line-height: 16px;
  white-space: nowrap;
}

.link {
  display: block;
  color: #00788a;
  line-height: 16px;
}

.alert {
  height: 47px;
  margin-top: 18px;
  padding: 0 21px 3px 22px;
  box-sizing: border-box;
  display: flex;
  align-items: center;
  background: #e3f0f1;
  font-size: 13px;
  font-weight: 700;
  letter-spacing: 0.15px;
  white-space: nowrap;
}

.alert-icon {
  width: 16px;
  height: 16px;
  margin-right: 9px;
  flex: none;
  fill: none;
  stroke: #002f36;
  stroke-width: 1.200;
}

.alert-close {
  width: 10px;
  height: 10px;
  margin-left: auto;
  flex: none;
  fill: none;
  stroke: #002f36;
  stroke-width: 1.400;
}

.panel {
  margin-top: 9px;
  border: 1px solid #d5dbdb;
  box-sizing: border-box;
}

.health {
  margin-top: 18px;
  height: 137px;
  padding: 18px;
  display: flex;
  gap: 18px;
}

.health-intro {
  width: 208.4px;
  flex: none;
  display: flex;
  flex-direction: column;
  justify-content: space-between;
  white-space: nowrap;
}

.health-intro strong {
  font-size: 12.4px;
  letter-spacing: 0;
  line-height: 15px;
}

.how {
  display: flex;
  align-items: center;
  gap: 6px;
  margin-bottom: 2px;
}

.how svg {
  width: 16px;
  height: 16px;
}

.rating {
  flex: 1;
  border: 1px solid #d5dbdb;
  display: flex;
  flex-direction: column;
  align-items: center;
  padding-top: 14px;
  box-sizing: border-box;
}

.pill {
  width: 101px;
  height: 18px;
  border-radius: 9px;
  color: #fff;
  font-size: 11.5px;
  font-weight: 700;
  letter-spacing: 0;
  line-height: 18px;
  text-align: center;
}

.very-poor {
  background: #c7103a;
}

.poor {
  background: #ff8f00;
}

.fair {
  background: #ffc400;
}

.good {
  background: #a2d719;
}

.excellent {
  background: #538000;
}

.count {
  margin-top: 3px;
  font-size: 22px;
  font-weight: 700;
  line-height: 30px;
}

.rating .link {
  line-height: 19px;
}

.filters {
  height: 69px;
  padding: 18px;
  display: flex;
  align-items: stretch;
}

.search-field {
  width: 180px;
  display: flex;
  border: 1px solid #8c9c9f;
  box-sizing: border-box;
}

.search-field-icon {
  width: 29px;
  background: #fafafa;
  border-right: 1px solid #8c9c9f;
  display: flex;
  align-items: center;
  justify-content: center;
}

.search-field-icon svg {
  width: 11px;
  height: 11px;
  fill: none;
  stroke: #002f36;
  stroke-width: 1.200;
}

.search-field-input {
  padding-left: 8px;
  font-size: 13px;
  letter-spacing: 0;
  line-height: 28px;
  font-style: italic;
  color: #555;
}

.btn {
  border: none;
  border-radius: 2px;
  font-family: inherit;
  font-size: 12.5px;
  letter-spacing: -0.2px;
  padding: 0;
  box-shadow: 0 1px 2px rgba(0, 47, 54, 0.35);
}

.primary {
  background: #008296;
  color: #fff;
}

.secondary {
  background: #e3ecee;
  color: #002f36;
}

.search-btn {
  width: 81px;
  margin-left: 15px;
  font-size: 12px;
  font-weight: 700;
  letter-spacing: 0;
}

.filters-label {
  width: 95px;
  margin-left: 235px;
  font-size: 12.5px;
  letter-spacing: 0;
  line-height: 29px;
}

.filter {
  display: flex;
  align-items: center;
  padding-bottom: 2px;
  white-space: nowrap;
}

.filter svg {
  width: 8px;
  height: 6px;
  margin-right: 10px;
  fill: none;
  stroke: #002f36;
  stroke-width: 1;
}

.fulfilled {
  width: 139px;
}

.cx {
  width: 133px;
}

.updated {
  width: 123px;
}

.clear-btn {
  width: 109px;
}

.download-btn {
  width: 126px;
  margin-left: 13px;
}

.listings {
  height: 200px;
  box-shadow: 0 0 2px rgba(0, 47, 54, 0.2);
}

h2 {
  height: 46px;
  margin: 0;
  padding-left: 22px;
  box-sizing: border-box;
  background: #fafafa;
  border-bottom: 1px solid #d5dbdb;
  font-size: 18px;
  font-weight: 700;
  letter-spacing: 0.4px;
  line-height: 48px;
}

.thead {
  display: flex;
  height: 80px;
  font-size: 12.5px;
  font-weight: 700;
  letter-spacing: 0;
}

.th {
  position: relative;
  box-sizing: border-box;
  padding: 11px 0 0 14px;
  display: flex;
  align-items: flex-start;
  justify-content: space-between;
}

.th::before {
  content: "";
  position: absolute;
  left: 0;
  width: 1px;
  background: #c5cfd1;
}

.sep-none::before {
  display: none;
}

.sep-short::before {
  top: 19px;
  height: 16px;
}

.sep-mid::before {
  top: 17px;
  height: 20px;
}

.sep-tall::before {
  top: 11px;
  height: 60px;
}

.th-title {
  display: flex;
  flex-direction: column;
  line-height: 16px;
  white-space: nowrap;
}

.current {
  background: #f3f8f9;
}

.col-select {
  width: 78px;
}

.col-product {
  width: 270px;
  padding-left: 13px;
}

.col-sku {
  width: 102px;
}

.col-fulfilled {
  width: 80px;
  padding-top: 19px;
}

.col-rate {
  width: 62px;
  padding-top: 19px;
  font-size: 12px;
}

.col-orders {
  width: 104px;
  padding-right: 8px;
}

.col-total {
  width: 107px;
  padding-right: 9px;
}

.col-reason {
  width: 88px;
  padding-left: 13px;
}

.col-updated {
  width: 113px;
  padding-top: 17px;
  padding-left: 13px;
  padding-right: 8px;
}

.col-health {
  width: 126px;
  padding-top: 17px;
  padding-right: 9px;
}

.col-action {
  width: 150px;
  padding-top: 19px;
}

.sort {
  width: 12px;
  height: 14px;
  margin-top: 6px;
  flex: none;
  fill: none;
  stroke: #002f36;
  stroke-width: 1.300;
}

.col-updated .sort,
.col-health .sort {
  margin-top: 1px;
}

.sort-down {
  width: 13px;
  height: 15px;
  margin-top: 8px;
  flex: none;
  fill: none;
  stroke: #002f36;
  stroke-width: 1.300;
}

.feedback {
  position: absolute;
  left: 19px;
  bottom: 0;
  width: 76px;
  height: 21px;
  padding-left: 11px;
  box-sizing: border-box;
  border-radius: 3px 3px 0 0;
  background: #008296;
  color: #fff;
  font-size: 9.5px;
  line-height: 21px;
  white-space: nowrap;
}

.feedback-x {
  margin-left: 2px;
  font-size: 13px;
}

.scrollbar {
  width: 17px;
  flex: none;
  background: #f1f1f1;
  display: flex;
  flex-direction: column;
  align-items: center;
  position: relative;
}

.thumb {
  width: 15px;
  height: 409px;
  margin-top: 8px;
  background: #c1c1c1;
}

.arrow {
  border: 4px solid transparent;
}

.arrow.up {
  margin-top: 4px;
  border-top: 0;
  border-bottom: 5px solid #a3a3a3;
}

.arrow.down {
  position: absolute;
  bottom: 5px;
  border-bottom: 0;
  border-top: 5px solid #505050;
}

/* windows taskbar */
.taskbar {
  height: 40px;
  flex: none;
  display: flex;
  background: #1e1e1e;
  color: #fff;
}

.task-slot {
  width: 48px;
  position: relative;
  display: flex;
  align-items: center;
  justify-content: center;
  box-sizing: border-box;
}

.view-slot {
  width: 50px;
}

.app {
  width: 49px;
}

.win-logo {
  width: 16px;
  height: 16px;
  fill: #fff;
}

.task-search {
  width: 24px;
  height: 24px;
  fill: none;
  stroke: #fff;
  stroke-width: 2;
}

.task-view {
  width: 18px;
  height: 16px;
  fill: none;
  stroke: #fff;
  stroke-width: 1;
}

.running::after {
  content: "";
  position: absolute;
  left: 4px;
  right: 5px;
  bottom: 0;
  height: 2px;
  background: #76b9ed;
}

.focused {
  background: #444;
}

.focused::after {
  left: 0;
  right: 0;
}

.badge-j {
  position: absolute;
  left: 21px;
  top: 18px;
  width: 16px;
  height: 16px;
  border-radius: 50%;
  background: #b8360f;
  font: 9px/16px "Open Sans", sans-serif;
  text-align: center;
}

.badge-count {
  position: absolute;
  left: 23px;
  top: 18px;
  width: 16px;
  height: 16px;
  border-radius: 50%;
  background: #e8352b;
  font: 10px/16px "Open Sans", sans-serif;
  text-align: center;
}

.tray {
  flex: 1;
  display: flex;
  align-items: center;
  padding-left: 393px;
  font-family: "Open Sans", sans-serif;
  white-space: nowrap;
}

.sun {
  width: 20px;
  height: 20px;
  border-radius: 50%;
  flex: none;
  background: linear-gradient(135deg, #f5b52a, #ef6a10);
}

.temp {
  margin-left: 10px;
  font-size: 14px;
}

.sky {
  margin-left: 7px;
  font-size: 13.5px;
}

.tray-chevron {
  width: 12px;
  height: 8px;
  margin-left: 24px;
  flex: none;
  fill: none;
  stroke: #fff;
  stroke-width: 1.200;
}

.tray-icon {
  width: 16px;
  height: 16px;
  flex: none;
  fill: none;
  stroke: #fff;
  stroke-width: 1.200;
}

.tray-icon .solid {
  fill: #fff;
}

.rec {
  margin-left: 10px;
}

.meet {
  margin-left: 8px;
}

.power {
  margin-left: 7px;
}

.wifi {
  margin-left: 10px;
}

.volume {
  margin-left: 7px;
}

.clock {
  width: 60px;
  margin-left: 6px;
  display: flex;
  flex-direction: column;
  align-items: center;
  font-size: 12px;
  letter-spacing: -0.3px;
  line-height: 19px;
}

.notify {
  width: 15px;
  height: 17px;
  margin-left: 14px;
  flex: none;
  fill: #fff;
}

.notify .lines {
  fill: none;
  stroke: #1e1e1e;
  stroke-width: 1;
}
</style>
